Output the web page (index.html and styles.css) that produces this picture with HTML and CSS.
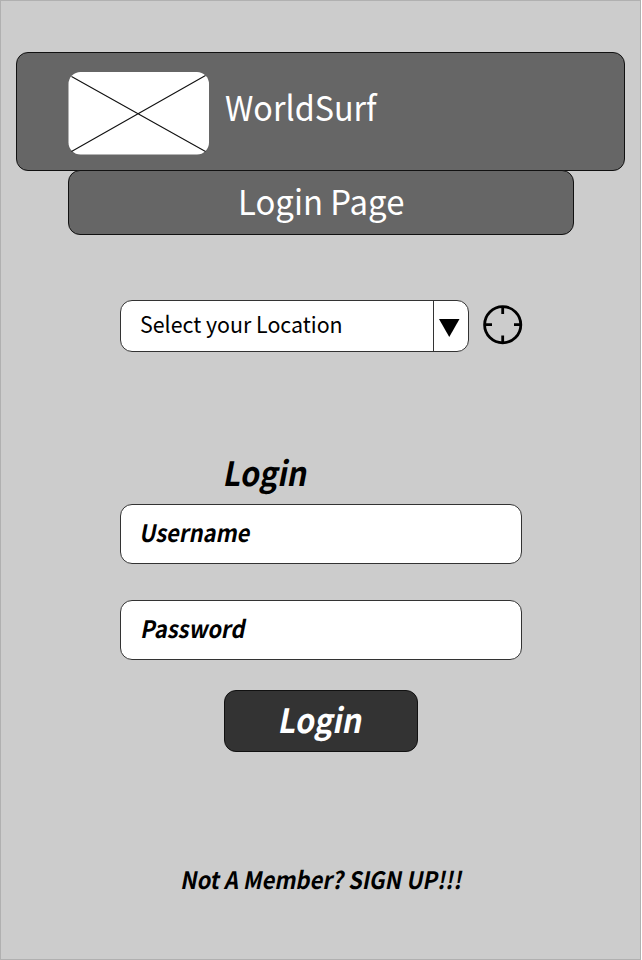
FILE: index.html
```html
<!DOCTYPE html>
<html lang="en">
<head>
<meta charset="utf-8">
<title>WorldSurf - Login Page</title>
<link rel="stylesheet" href="styles.css">
</head>
<body>
<main class="page">
  <header class="header">
    <svg class="logo" width="141" height="83" viewBox="0 0 141 83">
      <rect x=".5" width="140.500" height="82.500" rx="12" fill="#fff"/>
      <path d="M3.500 4.500L137.500 79.500M3.500 79.500L137.500 3.500" stroke="#111" stroke-width="1.100"/>
    </svg>
    <h1 class="brand"><span class="text">WorldSurf</span></h1>
  </header>
  <div class="subheader"><h2 class="title"><span class="text">Login Page</span></h2></div>
  <div class="location">
    <div class="select">
      <div class="select-label"><span class="text">Select your Location</span></div>
      <div class="select-arrow"><svg width="21" height="19" viewBox="0 0 21 19"><path d="M0 0H20.500L10.250 18Z"/></svg></div>
    </div>
    <svg class="locate" width="40" height="40" viewBox="0 0 40 40" fill="none" stroke="#000" stroke-width="2.800">
      <circle cx="19.700" cy="19.700" r="18.100"/>
      <path d="M19.700 2V9M19.700 30.500V38M2 19.700H9M31 19.700H38"/>
    </svg>
  </div>
  <form class="form">
    <h3 class="form-title"><span class="text">Login</span></h3>
    <div class="field username"><span class="text">Username</span></div>
    <div class="field password"><span class="text">Password</span></div>
    <div class="button"><span class="text">Login</span></div>
  </form>
  <p class="signup"><span class="text">Not A Member? SIGN UP!!!</span></p>
</main>
</body>
</html>
```
FILE: styles.css
```css
* { box-sizing: border-box; }
body { margin: 0; background: #fff; font-family: "Noto Sans CJK SC", "Noto Sans", sans-serif; color: #000; }
h1, h2, h3, p { margin: 0; font-weight: 400; }
svg { display: block; flex: none; }
.text { display: inline-block; white-space: nowrap; transform-origin: 0 50%; }
.page { width: 641px; height: 960px; padding-top: 51px; background: #ccc; border: 1px solid #b0b0b0; display: flex; flex-direction: column; }
.header { width: 609px; height: 119px; margin-left: 15px; padding: 19px 0 0 51px; display: flex; background: #666; border: 1px solid #111; border-radius: 12px; }
.brand { margin: 10px 0 0 16px; font-size: 34px; line-height: 50px; color: #fff; }
.subheader { width: 506px; height: 65px; margin: -1px 0 0 67px; padding: 5px 0 0 169px; background: #666; border: 1px solid #111; border-radius: 12px; }
.title { font-size: 34px; line-height: 50px; color: #fff; }
.location { display: flex; margin: 65px 0 0 119px; }
.select { display: flex; width: 349px; height: 52px; background: #fff; border: 1px solid #333; border-radius: 12px; }
.select-label { width: 313px; padding-left: 19px; font-size: 22.500px; line-height: 45px; border-right: 1px solid #333; }
.select-arrow { padding: 18px 0 0 5px; }
.locate { margin: 5px 0 0 14px; }
.form { margin: 95px 0 0 119px; font-weight: 700; }
.form-title { padding-left: 105px; font-size: 33.500px; line-height: 50px; font-weight: 700; }
.field { width: 402px; height: 60px; padding-left: 20px; font-size: 24px; line-height: 54px; background: #fff; border: 1px solid #333; border-radius: 12px; }
.username { margin-top: 7px; }
.password { margin-top: 36px; padding-left: 21px; }
.button { width: 194px; height: 62px; margin: 30px 0 0 104px; padding-left: 55px; font-size: 33.500px; line-height: 56px; color: #fff; background: #333; border: 1px solid #111; border-radius: 12px; }
.signup { margin: 109px 0 0 181px; font-size: 24px; line-height: 36px; font-weight: 700; }
.brand .text, .select .text { transform: scaleX(.95); }
.title .text { transform: scaleX(.967); }
.form .text, .signup .text { transform: skewX(-11deg) scaleX(.913); }
```
